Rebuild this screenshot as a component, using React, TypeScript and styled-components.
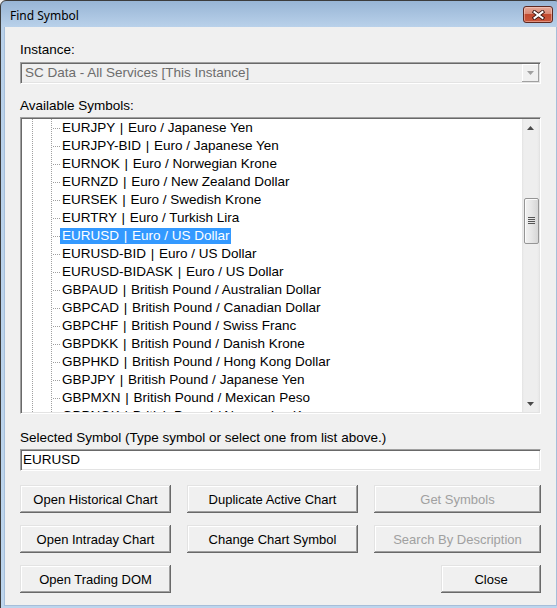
import styled, { createGlobalStyle } from 'styled-components';

const GlobalStyle = createGlobalStyle`
   html, body {
      margin: 0;
      padding: 0;
      background: #f0f0f0;
      overflow: hidden;
   }
   #root {
      width: 557px;
      height: 608px;
      overflow: hidden;
   }
`;

const UI_FONT = `'Liberation Sans', Arial, sans-serif`;

const Window = styled.div`
   width: 561px;
   height: 610px;
   box-sizing: border-box;
   border: 1px solid #3c3c3c;
   border-radius: 6px 6px 0 0;
   padding: 0 3px 3px 3px;
   background: linear-gradient(to bottom, #98b5d5 0px, #b9d1ea 26px, #bdd5ed 100%);
   display: flex;
   flex-direction: column;
`;

const TitleBar = styled.div`
   height: 26px;
   flex: none;
   display: flex;
   align-items: flex-start;
   padding-left: 6px;
   padding-right: 4px;
`;

const Title = styled.div`
   font: 12px 'Noto Sans', 'Open Sans', sans-serif;
   color: #000;
   padding-top: 6px;
`;

const CloseBox = styled.div`
   margin-left: auto;
   margin-top: 5px;
   width: 30px;
   height: 17px;
   box-sizing: border-box;
   border: 1px solid #5e2820;
   border-radius: 3px;
   box-shadow: inset 0 0 0 1px rgba(255, 220, 210, 0.45);
   background: linear-gradient(to bottom, #e5a898 0%, #d98a76 45%, #c24a2f 50%, #c9563b 100%);
   display: flex;
   align-items: center;
   justify-content: center;
`;

const Client = styled.div`
   flex: 1;
   background: #f0f0f0;
   border: 1px solid #a6bed9;
   border-top: none;
   padding: 15px 15px 0 15px;
   display: flex;
   flex-direction: column;
   font-family: ${UI_FONT};
`;

const FieldLabel = styled.div<{ $gap?: number }>`
   margin-top: ${(p) => p.$gap ?? 0}px;
   font-size: 13.5px;
   line-height: 16px;
   color: #000;
   white-space: nowrap;
`;

// classic two-tone sunken frame shared by the combo, list and edit box
const Sunken = styled.div`
   box-sizing: border-box;
   border-style: solid;
   border-width: 1px;
   border-color: #a0a0a0 #ffffff #ffffff #a0a0a0;
   padding: 1px;
   box-shadow: inset 1px 1px #696969, inset -1px -1px #e3e3e3;
`;

const Combo = styled(Sunken)`
   margin-top: 4px;
   height: 22px;
   display: flex;
   background: #f0f0f0;
`;

const ComboText = styled.div`
   flex: 1;
   padding-left: 3px;
   font-size: 13.5px;
   line-height: 18px;
   color: #6d6d6d;
   white-space: nowrap;
`;

const DropButton = styled.div`
   width: 17px;
   height: 18px;
   box-sizing: border-box;
   background: #f0f0f0;
   box-shadow: inset -1px -1px #a0a0a0, inset 1px 1px #ffffff;
   display: flex;
   align-items: center;
   justify-content: center;
`;

const ListBox = styled(Sunken)`
   margin-top: 3px;
   height: 297px;
   display: flex;
   background: #fff;
`;

const Tree = styled.div`
   flex: 1;
   overflow: hidden;
   padding-left: 10px;
`;

const TreeRow = styled.div`
   display: flex;
   height: 18px;
`;

const DOTS_V = 'repeating-linear-gradient(to bottom, #a0a0a0 0 1px, transparent 1px 2px)';
const DOTS_H = 'repeating-linear-gradient(to right, #a0a0a0 0 1px, transparent 1px 2px)';

const Guide = styled.span`
   flex: none;
   width: 19px;
   background: ${DOTS_V} left top / 1px 100% no-repeat;
`;

const Connector = styled.span`
   flex: none;
   width: 9px;
   background:
      ${DOTS_V} left top / 1px 100% no-repeat,
      ${DOTS_H} 2px 9px / 7px 1px no-repeat;
`;

const TreeLabel = styled.span<{ $selected?: boolean }>`
   align-self: center;
   height: 16px;
   padding: 0 1px 0 2px;
   font-size: 13.5px;
   line-height: 16px;
   white-space: nowrap;
   color: ${(p) => (p.$selected ? '#fff' : '#000')};
   background: ${(p) => (p.$selected ? '#3399ff' : 'transparent')};
`;

const Pipe = styled.span`
   padding: 0 1px;
`;

const ScrollBar = styled.div`
   width: 17px;
   flex: none;
   display: flex;
   flex-direction: column;
   background: linear-gradient(to right, #e3e3e3 0, #eeeeee 2px, #eeeeee 15px, #e8e8e8 17px);
`;

const ScrollArrow = styled.div`
   height: 17px;
   flex: none;
   display: flex;
   align-items: center;
   justify-content: center;
`;

const ScrollTrack = styled.div<{ $offset: number }>`
   flex: 1;
   padding-top: ${(p) => p.$offset}px;
`;

const Thumb = styled.div`
   height: 46px;
   margin-left: 2px;
   width: 15px;
   box-sizing: border-box;
   border: 1px solid #959595;
   border-radius: 2px;
   background: linear-gradient(to right, #f2f2f2 0%, #e6e6e6 50%, #d6d6d6 100%);
   box-shadow: inset 1px 1px #fbfbfb;
   display: flex;
   align-items: center;
   justify-content: center;
`;

const EditBox = styled(Sunken)`
   margin-top: 3px;
   height: 22px;
   background: #fff;
   display: flex;
`;

const EditInput = styled.input`
   flex: 1;
   min-width: 0;
   border: none;
   outline: none;
   margin: 0;
   padding: 0 0 0 1px;
   height: 18px;
   background: transparent;
   font-family: ${UI_FONT};
   font-size: 13.5px;
   line-height: 18px;
   color: #000;
`;

const ButtonGrid = styled.div`
   margin-top: 14px;
   display: grid;
   grid-template-columns: 151px 171px 167px;
   column-gap: 16px;
   row-gap: 12px;
`;

const DialogButton = styled.button<{ $width?: number }>`
   height: 28px;
   width: ${(p) => (p.$width ? `${p.$width}px` : 'auto')};
   justify-self: ${(p) => (p.$width ? 'end' : 'stretch')};
   box-sizing: border-box;
   margin: 0;
   padding: 0;
   border: none;
   background: #f0f0f0;
   box-shadow: inset -1px -1px #696969, inset 1px 1px #e3e3e3, inset -2px -2px #a0a0a0, inset 2px 2px #ffffff;
   font-family: ${UI_FONT};
   font-size: 13px;
   color: #000;
   white-space: nowrap;

   &:disabled {
      color: #a0a0a0;
   }
`;

const symbols: [string, string][] = [
   ['EURJPY', 'Euro / Japanese Yen'],
   ['EURJPY-BID', 'Euro / Japanese Yen'],
   ['EURNOK', 'Euro / Norwegian Krone'],
   ['EURNZD', 'Euro / New Zealand Dollar'],
   ['EURSEK', 'Euro / Swedish Krone'],
   ['EURTRY', 'Euro / Turkish Lira'],
   ['EURUSD', 'Euro / US Dollar'],
   ['EURUSD-BID', 'Euro / US Dollar'],
   ['EURUSD-BIDASK', 'Euro / US Dollar'],
   ['GBPAUD', 'British Pound / Australian Dollar'],
   ['GBPCAD', 'British Pound / Canadian Dollar'],
   ['GBPCHF', 'British Pound / Swiss Franc'],
   ['GBPDKK', 'British Pound / Danish Krone'],
   ['GBPHKD', 'British Pound / Hong Kong Dollar'],
   ['GBPJPY', 'British Pound / Japanese Yen'],
   ['GBPMXN', 'British Pound / Mexican Peso'],
   ['GBPNOK', 'British Pound / Norwegian Krone'],
];

const selectedSymbol = 'EURUSD';

function CloseGlyph() {
   return (
      <svg width="13" height="10" viewBox="0 0 13 10">
         <path d="M2.5 2 L10.5 8 M10.5 2 L2.5 8" stroke="#3b1712" strokeWidth="3.8" strokeLinecap="square" />
         <path d="M2.5 2 L10.5 8 M10.5 2 L2.5 8" stroke="#ffffff" strokeWidth="2" strokeLinecap="square" />
      </svg>
   );
}

function Arrow({ up, color }: { up?: boolean; color: string }) {
   return (
      <svg width="7" height="4" viewBox="0 0 7 4">
         <polygon points={up ? '0,4 7,4 3.5,0' : '0,0 7,0 3.5,4'} fill={color} />
      </svg>
   );
}

function Grip() {
   return (
      <svg width="7" height="8" viewBox="0 0 7 8">
         {[0, 2, 4, 6].map((y) => (
            <rect key={y} x="0" y={y} width="7" height="1" fill="#555" />
         ))}
      </svg>
   );
}

export default function App(): JSX.Element {
   return (
      <>
         <GlobalStyle />
         <Window>
            <TitleBar>
               <Title>Find Symbol</Title>
               <CloseBox>
                  <CloseGlyph />
               </CloseBox>
            </TitleBar>
            <Client>
               <FieldLabel>Instance:</FieldLabel>
               <Combo>
                  <ComboText>SC Data - All Services [This Instance]</ComboText>
                  <DropButton>
                     <Arrow color="#a0a0a0" />
                  </DropButton>
               </Combo>

               <FieldLabel $gap={14}>Available Symbols:</FieldLabel>
               <ListBox>
                  <Tree>
                     {symbols.map(([code, name]) => (
                        <TreeRow key={code}>
                           <Guide />
                           <Connector />
                           <TreeLabel $selected={code === selectedSymbol}>
                              {code} <Pipe>|</Pipe> {name}
                           </TreeLabel>
                        </TreeRow>
                     ))}
                  </Tree>
                  <ScrollBar>
                     <ScrollArrow>
                        <Arrow up color="#4a4a4a" />
                     </ScrollArrow>
                     <ScrollTrack $offset={62}>
                        <Thumb>
                           <Grip />
                        </Thumb>
                     </ScrollTrack>
                     <ScrollArrow>
                        <Arrow color="#4a4a4a" />
                     </ScrollArrow>
                  </ScrollBar>
               </ListBox>

               <FieldLabel $gap={16}>Selected Symbol (Type symbol or select one from list above.)</FieldLabel>
               <EditBox>
                  <EditInput defaultValue={selectedSymbol} />
               </EditBox>

               <ButtonGrid>
                  <DialogButton>Open Historical Chart</DialogButton>
                  <DialogButton>Duplicate Active Chart</DialogButton>
                  <DialogButton disabled>Get Symbols</DialogButton>
                  <DialogButton>Open Intraday Chart</DialogButton>
                  <DialogButton>Change Chart Symbol</DialogButton>
                  <DialogButton disabled>Search By Description</DialogButton>
                  <DialogButton>Open Trading DOM</DialogButton>
                  <span />
                  <DialogButton $width={100}>Close</DialogButton>
               </ButtonGrid>
            </Client>
         </Window>
      </>
   );
}
